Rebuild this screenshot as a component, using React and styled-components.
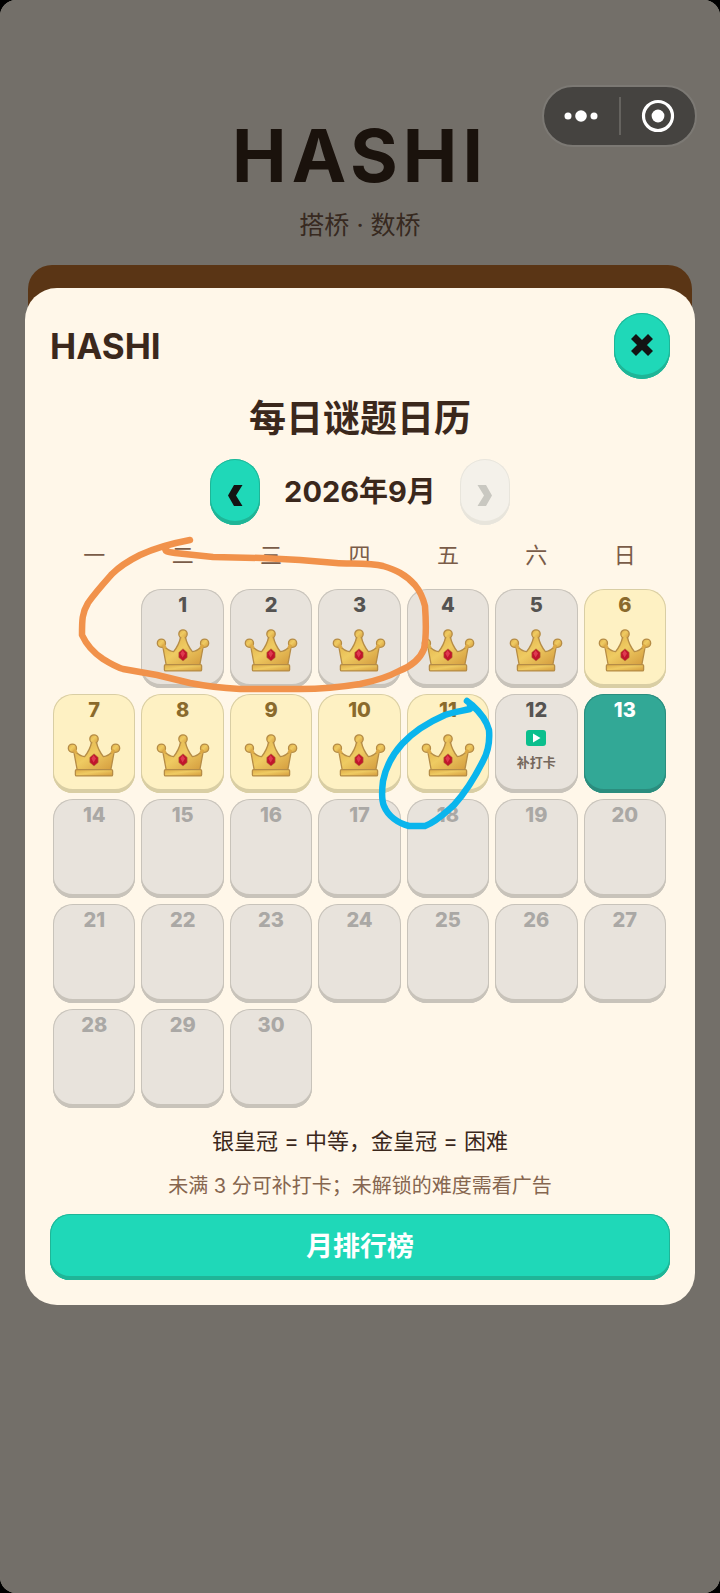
import React from "react";
import styled, { createGlobalStyle, css } from "styled-components";

const GlobalStyle = createGlobalStyle`
  *, *::before, *::after { box-sizing: border-box; }
  html { background: #000; }
  body {
    margin: 0;
    font-family: Inter, "Noto Sans CJK SC", sans-serif;
    color: #3b281c;
  }
  button { font: inherit; color: inherit; padding: 0; border: 0; cursor: pointer; }
  h1, h2, p { margin: 0; }
`;

const Screen = styled.div`
  position: relative;
  display: flex;
  flex-direction: column;
  min-height: 100vh;
  overflow: hidden;
  border-radius: 16px;
  background: #fff7e9;
`;

const PageHeader = styled.header`
  padding-top: 116px;
  text-align: center;
`;

const PageTitle = styled.h1`
  font-size: 73px;
  line-height: 80px;
  font-weight: 700;
  letter-spacing: 5px;
`;

const PageSubtitle = styled.p`
  margin-top: 13px;
  font-size: 25px;
  line-height: 32px;
  color: #7a5c48;
`;

const Board = styled.div`
  height: 600px;
  margin: 24px 28px 0;
  border-radius: 24px;
  background: #c87630;
`;

const Backdrop = styled.div`
  position: absolute;
  inset: 0;
  display: flex;
  align-items: center;
  justify-content: center;
  padding: 0 25px;
  background: rgba(0, 0, 0, 0.55);
`;

const Modal = styled.section`
  width: 100%;
  padding: 25px;
  border-radius: 32px;
  background: #fff7e9;
`;

const ModalHeader = styled.div`
  display: flex;
  align-items: center;
  justify-content: space-between;
`;

const Brand = styled.span`
  font-size: 35px;
  line-height: 44px;
  font-weight: 700;
`;

const PillButton = styled.button`
  display: flex;
  align-items: center;
  justify-content: center;
  width: ${(p) => (p.$wide ? 56 : 50)}px;
  height: 66px;
  padding-bottom: 2px;
  border-radius: 28px;
  color: #131313;
  background: #1fd8b8;
  box-shadow: inset 0 -4px 0 #1fb597, inset 0 0 0 1px #1fb597;
  &:disabled {
    color: #c9c8c1;
    background: #f4f1ea;
    box-shadow: inset 0 -4px 0 #e8e5dc, inset 0 0 0 1px #e8e5dc;
  }
`;

const ModalTitle = styled.h2`
  margin-top: 18px;
  font-size: 37px;
  line-height: 44px;
  font-weight: 700;
  text-align: center;
`;

const MonthNav = styled.div`
  display: flex;
  align-items: center;
  justify-content: center;
  gap: 24px;
  margin-top: 18px;
`;

const MonthLabel = styled.span`
  font-size: 29px;
  line-height: 40px;
  font-weight: 700;
`;

const Calendar = styled.div`
  position: relative;
  margin: 14px 4px 0 3px;
`;

const Weekdays = styled.div`
  display: grid;
  grid-template-columns: repeat(7, 1fr);
  gap: 6px;
  margin-bottom: 18px;
  font-size: 22px;
  line-height: 32px;
  text-align: center;
  color: #7a5c48;
`;

const Days = styled.div`
  display: grid;
  grid-template-columns: repeat(7, 1fr);
  gap: 6px;
`;

const dayKinds = {
  gray: css`
    --edge: #c8c3ba;
    color: #555351;
    background: #e8e3dc;
  `,
  gold: css`
    --edge: #d9cea4;
    color: #8a6a2c;
    background: #fef1c3;
  `,
  today: css`
    --edge: #2b8d7e;
    color: #fff;
    background: #32a896;
  `,
  future: css`
    --edge: #c8c3ba;
    color: #aaa8a5;
    background: #e8e3dc;
  `,
};

const Day = styled.button`
  display: flex;
  flex-direction: column;
  align-items: center;
  height: 99px;
  padding-top: 4px;
  border-radius: 20px;
  grid-column-start: ${(p) => p.$column || "auto"};
  ${(p) => dayKinds[p.$kind]}
  box-shadow: inset 0 -4px 0 var(--edge), inset 0 0 0 1px var(--edge);
`;

const DayNumber = styled.span`
  font-size: 20px;
  line-height: 24px;
  font-weight: 800;
`;

const CrownIcon = styled.svg`
  width: 54px;
  height: 43px;
  margin-top: 12px;
`;

const AdIcon = styled.svg`
  width: 20px;
  height: 16px;
  margin-top: 8px;
`;

const MakeUpLabel = styled.span`
  margin-top: 6px;
  font-size: 13px;
  line-height: 20px;
  font-weight: 700;
  color: #75685d;
`;

const Markup = styled.svg`
  position: absolute;
  inset: 0;
  width: 100%;
  height: 100%;
  overflow: visible;
  pointer-events: none;
`;

const Legend = styled.p`
  margin-top: 17px;
  font-size: 22px;
  line-height: 32px;
  text-align: center;
`;

const Hint = styled.p`
  margin-top: 15px;
  font-size: 20px;
  line-height: 28px;
  text-align: center;
  color: #86664f;
`;

const RankingButton = styled.button`
  display: block;
  width: 100%;
  height: 66px;
  margin-top: 14px;
  border-radius: 20px;
  font-size: 27px;
  line-height: 40px;
  font-weight: 700;
  color: #fff;
  background: #1fd8b8;
  box-shadow: inset 0 -4px 0 #1fb597, inset 0 0 0 1px #1fb597;
`;

const Capsule = styled.div`
  position: absolute;
  top: 85px;
  right: 23px;
  display: flex;
  align-items: center;
  width: 155px;
  height: 62px;
  border: 2px solid #7c7974;
  border-radius: 31px;
  background: #454340;
`;

const CapsuleButton = styled.button`
  display: flex;
  flex: 1;
  align-items: center;
  justify-content: center;
  height: 100%;
  background: none;
  color: #fff;
`;

const CapsuleDivider = styled.span`
  width: 2px;
  height: 38px;
  background: #65635f;
`;

function Crown() {
  return (
    <CrownIcon viewBox="0 0 54 43" role="img" aria-label="金皇冠">
      <g fill="url(#gold)" stroke="#b58c46" strokeWidth="1.3" strokeLinejoin="round">
        <path d="M6.5 16 C10.5 20 14 22.6 17.6 22.6 C20.6 19 23.4 14 24.6 8 H29.4 C30.6 14 33.4 19 36.4 22.6 C40 22.6 43.5 20 47.5 16 L43.8 36 H10.2 Z" />
        <circle cx="27" cy="5" r="4.2" />
        <circle cx="5.4" cy="14.2" r="4.1" />
        <circle cx="48.6" cy="14.2" r="4.1" />
        <rect x="8.4" y="35.6" width="37.2" height="6.3" rx="1.2" />
      </g>
      <path d="M25.6 7.6 H28.4 L29 11 H25 Z" fill="#eac25a" />
      <path d="M5.8 16.6 L8.4 14.8 L10.8 18.6 L7.6 19.8 Z" fill="#deac48" />
      <path d="M48.2 16.6 L45.6 14.8 L43.2 18.6 L46.4 19.8 Z" fill="#dda944" />
      <path d="M27 19.8 L31.2 23.4 V28.4 L27 32 L22.8 28.4 V23.4 Z" fill="#c0152c" stroke="#a87c34" strokeWidth="0.5" />
      <path d="M26.6 21.2 L29 24.4 L26.6 28.6 L24.4 24.4 Z" fill="#df3a50" />
    </CrownIcon>
  );
}

function dayKind(day) {
  if (day === 13) return "today";
  if (day > 13) return "future";
  if (day >= 6 && day <= 11) return "gold";
  return "gray";
}

const weekdays = ["一", "二", "三", "四", "五", "六", "日"];
const days = Array.from({ length: 30 }, (_, i) => i + 1);

export default function App() {
  return (
    <>
      <GlobalStyle />
      <svg width="0" height="0" style={{ position: "absolute" }} aria-hidden="true">
        <defs>
          <linearGradient id="gold" x1="0" y1="0" x2="1" y2="1">
            <stop offset="0" stopColor="#dfac46" />
            <stop offset="0.45" stopColor="#efcb62" />
            <stop offset="1" stopColor="#d39a3c" />
          </linearGradient>
        </defs>
      </svg>
      <Screen>
        <PageHeader>
          <PageTitle>HASHI</PageTitle>
          <PageSubtitle>搭桥 · 数桥</PageSubtitle>
        </PageHeader>
        <Board />
        <Backdrop>
          <Modal role="dialog" aria-labelledby="calendar-title">
            <ModalHeader>
              <Brand>HASHI</Brand>
              <PillButton $wide aria-label="关闭">
                <svg width="24" height="24" viewBox="0 0 24 24" stroke="currentColor" strokeWidth="7">
                  <path d="M3.5 3.5 L20.5 20.5 M20.5 3.5 L3.5 20.5" />
                </svg>
              </PillButton>
            </ModalHeader>
            <ModalTitle id="calendar-title">每日谜题日历</ModalTitle>
            <MonthNav>
              <PillButton aria-label="上个月">
                <svg width="16" height="22" viewBox="0 0 16 22" fill="currentColor" overflow="visible">
                  <path d="M7 5 H15.5 L9 15.5 L15.5 26 H7 L1 15.5 Z" />
                </svg>
              </PillButton>
              <MonthLabel>2026年9月</MonthLabel>
              <PillButton aria-label="下个月" disabled>
                <svg width="16" height="22" viewBox="0 0 16 22" fill="currentColor" overflow="visible">
                  <path d="M9 5 H0.5 L7 15.5 L0.5 26 H9 L15 15.5 Z" />
                </svg>
              </PillButton>
            </MonthNav>
            <Calendar>
              <Weekdays>
                {weekdays.map((name) => (
                  <span key={name}>{name}</span>
                ))}
              </Weekdays>
              <Days>
                {days.map((day) => (
                  <Day key={day} $kind={dayKind(day)} $column={day === 1 ? 2 : undefined} disabled={day > 13}>
                    <DayNumber>{day}</DayNumber>
                    {day < 12 && <Crown />}
                    {day === 12 && (
                      <>
                        <AdIcon viewBox="0 0 20 16" aria-hidden="true">
                          <rect width="20" height="16" rx="3" fill="#0bbf8d" />
                          <path d="M7 3.5 L14.5 8 L7 12.5 Z" fill="#fff" />
                        </AdIcon>
                        <MakeUpLabel>补打卡</MakeUpLabel>
                      </>
                    )}
                  </Day>
                ))}
              </Days>
              <Markup viewBox="53 539 613 569" preserveAspectRatio="none" fill="none" strokeLinecap="round" strokeLinejoin="round" aria-hidden="true">
                <path
                  stroke="#f1924b"
                  strokeWidth="6.5"
                  d="M190 540 C174 543 155 548 140 555 C126 562 119 567 112 574 C104 583 95 593 88 603 C82 613 82 620 82 635 C87 646 94 653 103 659 C111 664 116 667 123 669 L157 675 L190 683 C210 687 222 688 240 689 H300 C322 689 342 687 360 684 C375 681 386 678 399 671 C412 666 420 659 424 649 C427 635 426 620 425 606 C423 598 420 591 415 585 C405 574 396 570 383 566 C370 563 350 564 336 563 L300 560 L262 558 L213 557 L175 553 C167 552 164 551 166 548"
                />
                <path
                  stroke="#0ab5ed"
                  strokeWidth="6.5"
                  d="M467 701 L472 705 C482 714 487 722 489 730 C490 742 488 752 483 761 C474 779 463 795 454 805 C445 813 436 822 425 826 H409 C398 823 388 816 384 806 C381 799 382 789 383 781 C386 766 393 754 402 744 C412 733 429 722 445 715 C454 712 462 711 470 709 L470 704"
                />
              </Markup>
            </Calendar>
            <Legend>银皇冠 = 中等，金皇冠 = 困难</Legend>
            <Hint>未满 3 分可补打卡；未解锁的难度需看广告</Hint>
            <RankingButton>月排行榜</RankingButton>
          </Modal>
        </Backdrop>
        <Capsule>
          <CapsuleButton aria-label="更多">
            <svg width="34" height="14" viewBox="0 0 34 14" fill="currentColor">
              <circle cx="4" cy="7" r="3.5" />
              <circle cx="17" cy="7" r="5.8" />
              <circle cx="30" cy="7" r="3.5" />
            </svg>
          </CapsuleButton>
          <CapsuleDivider />
          <CapsuleButton aria-label="关闭小程序">
            <svg width="34" height="34" viewBox="0 0 34 34">
              <circle cx="17" cy="17" r="14.5" fill="none" stroke="currentColor" strokeWidth="3.2" />
              <circle cx="17" cy="17" r="6.4" fill="currentColor" />
            </svg>
          </CapsuleButton>
        </Capsule>
      </Screen>
    </>
  );
}
